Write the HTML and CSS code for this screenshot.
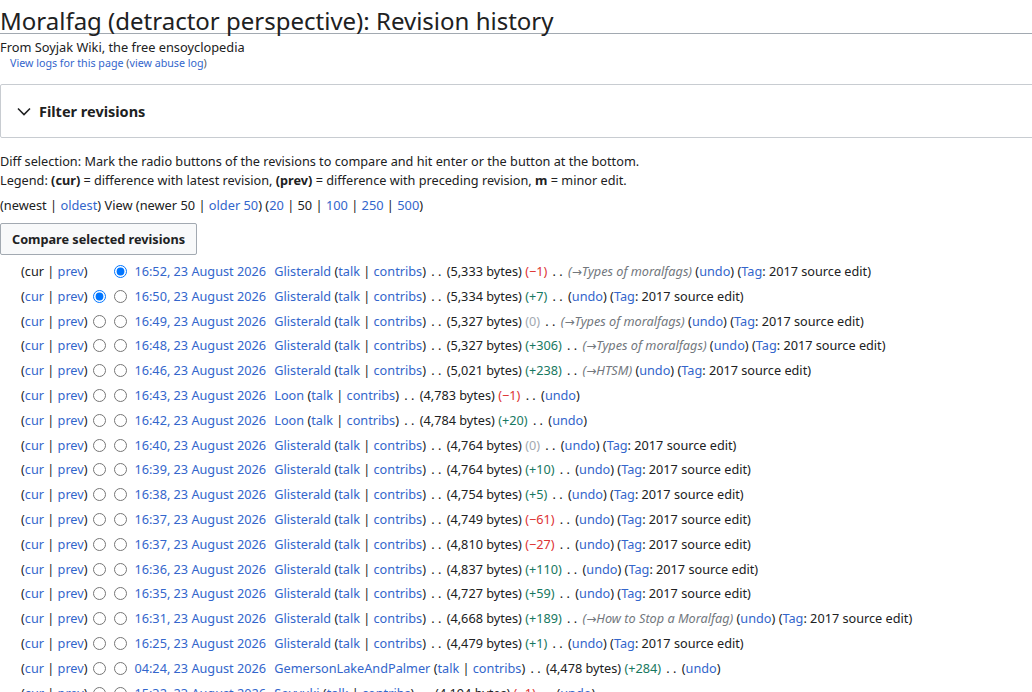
FILE: index.html
```html
<!DOCTYPE html>
<html lang="en">
<head>
<meta charset="utf-8">
<title>Moralfag (detractor perspective): Revision history</title>
<link rel="stylesheet" href="styles.css">
</head>
<body>
<div class="page">
  <h1 class="title">Moralfag (detractor perspective): Revision history</h1>
  <div class="tagline">From Soyjak Wiki, the free ensoyclopedia</div>
  <div class="logs"><a href="#">View logs for this page</a> (<a href="#">view abuse log</a>)</div>

  <div class="filter">
    <svg class="chev" width="16" height="16" viewBox="0 0 16 16"><path d="M2 5.5 L8 11.5 L14 5.5" fill="none" stroke="#202122" stroke-width="1.6"/></svg>
    <span class="filter-label">Filter revisions</span>
  </div>

  <p class="info">Diff selection: Mark the radio buttons of the revisions to compare and hit enter or the button at the bottom.<br>Legend: <b>(cur)</b> = difference with latest revision, <b>(prev)</b> = difference with preceding revision, <b>m</b> = minor edit.</p>

  <p class="nav">(newest | <a href="#">oldest</a>) View (newer 50 | <a href="#">older 50</a>) (<a href="#">20</a> | 50 | <a href="#">100</a> | <a href="#">250</a> | <a href="#">500</a>)</p>

  <button class="compare">Compare selected revisions</button>

  <ul class="history">
    <li>(cur | <a href="#">prev</a>) <input type="radio" class="hidden" name="o1"> <input type="radio" name="d1" checked> <a href="#" class="date">16:52, 23 August 2026</a> <span class="user"><a href="#">Glisterald</a> (<a href="#">talk</a> | <a href="#">contribs</a>)</span> <span class="sep">. .</span> (5,333 bytes) <span class="neg">(−1)</span> <span class="sep">. .</span> <span class="cmt">(<span class="arr">→</span>Types of moralfags)</span> (<a href="#">undo</a>) (<a href="#">Tag</a>: 2017 source edit)</li>
    <li>(<a href="#">cur</a> | <a href="#">prev</a>) <input type="radio" name="o2" checked> <input type="radio" name="d2"> <a href="#" class="date">16:50, 23 August 2026</a> <span class="user"><a href="#">Glisterald</a> (<a href="#">talk</a> | <a href="#">contribs</a>)</span> <span class="sep">. .</span> (5,334 bytes) <span class="pos">(+7)</span> <span class="sep">. .</span> (<a href="#">undo</a>) (<a href="#">Tag</a>: 2017 source edit)</li>
    <li>(<a href="#">cur</a> | <a href="#">prev</a>) <input type="radio"> <input type="radio"> <a href="#" class="date">16:49, 23 August 2026</a> <span class="user"><a href="#">Glisterald</a> (<a href="#">talk</a> | <a href="#">contribs</a>)</span> <span class="sep">. .</span> (5,327 bytes) <span class="null">(0)</span> <span class="sep">. .</span> <span class="cmt">(<span class="arr">→</span>Types of moralfags)</span> (<a href="#">undo</a>) (<a href="#">Tag</a>: 2017 source edit)</li>
    <li>(<a href="#">cur</a> | <a href="#">prev</a>) <input type="radio"> <input type="radio"> <a href="#" class="date">16:48, 23 August 2026</a> <span class="user"><a href="#">Glisterald</a> (<a href="#">talk</a> | <a href="#">contribs</a>)</span> <span class="sep">. .</span> (5,327 bytes) <span class="pos">(+306)</span> <span class="sep">. .</span> <span class="cmt">(<span class="arr">→</span>Types of moralfags)</span> (<a href="#">undo</a>) (<a href="#">Tag</a>: 2017 source edit)</li>
    <li>(<a href="#">cur</a> | <a href="#">prev</a>) <input type="radio"> <input type="radio"> <a href="#" class="date">16:46, 23 August 2026</a> <span class="user"><a href="#">Glisterald</a> (<a href="#">talk</a> | <a href="#">contribs</a>)</span> <span class="sep">. .</span> (5,021 bytes) <span class="pos">(+238)</span> <span class="sep">. .</span> <span class="cmt">(<span class="arr">→</span>HTSM)</span> (<a href="#">undo</a>) (<a href="#">Tag</a>: 2017 source edit)</li>
    <li>(<a href="#">cur</a> | <a href="#">prev</a>) <input type="radio"> <input type="radio"> <a href="#" class="date">16:43, 23 August 2026</a> <span class="user"><a href="#">Loon</a> (<a href="#">talk</a> | <a href="#">contribs</a>)</span> <span class="sep">. .</span> (4,783 bytes) <span class="neg">(−1)</span> <span class="sep">. .</span> (<a href="#">undo</a>)</li>
    <li>(<a href="#">cur</a> | <a href="#">prev</a>) <input type="radio"> <input type="radio"> <a href="#" class="date">16:42, 23 August 2026</a> <span class="user"><a href="#">Loon</a> (<a href="#">talk</a> | <a href="#">contribs</a>)</span> <span class="sep">. .</span> (4,784 bytes) <span class="pos">(+20)</span> <span class="sep">. .</span> (<a href="#">undo</a>)</li>
    <li>(<a href="#">cur</a> | <a href="#">prev</a>) <input type="radio"> <input type="radio"> <a href="#" class="date">16:40, 23 August 2026</a> <span class="user"><a href="#">Glisterald</a> (<a href="#">talk</a> | <a href="#">contribs</a>)</span> <span class="sep">. .</span> (4,764 bytes) <span class="null">(0)</span> <span class="sep">. .</span> (<a href="#">undo</a>) (<a href="#">Tag</a>: 2017 source edit)</li>
    <li>(<a href="#">cur</a> | <a href="#">prev</a>) <input type="radio"> <input type="radio"> <a href="#" class="date">16:39, 23 August 2026</a> <span class="user"><a href="#">Glisterald</a> (<a href="#">talk</a> | <a href="#">contribs</a>)</span> <span class="sep">. .</span> (4,764 bytes) <span class="pos">(+10)</span> <span class="sep">. .</span> (<a href="#">undo</a>) (<a href="#">Tag</a>: 2017 source edit)</li>
    <li>(<a href="#">cur</a> | <a href="#">prev</a>) <input type="radio"> <input type="radio"> <a href="#" class="date">16:38, 23 August 2026</a> <span class="user"><a href="#">Glisterald</a> (<a href="#">talk</a> | <a href="#">contribs</a>)</span> <span class="sep">. .</span> (4,754 bytes) <span class="pos">(+5)</span> <span class="sep">. .</span> (<a href="#">undo</a>) (<a href="#">Tag</a>: 2017 source edit)</li>
    <li>(<a href="#">cur</a> | <a href="#">prev</a>) <input type="radio"> <input type="radio"> <a href="#" class="date">16:37, 23 August 2026</a> <span class="user"><a href="#">Glisterald</a> (<a href="#">talk</a> | <a href="#">contribs</a>)</span> <span class="sep">. .</span> (4,749 bytes) <span class="neg">(−61)</span> <span class="sep">. .</span> (<a href="#">undo</a>) (<a href="#">Tag</a>: 2017 source edit)</li>
    <li>(<a href="#">cur</a> | <a href="#">prev</a>) <input type="radio"> <input type="radio"> <a href="#" class="date">16:37, 23 August 2026</a> <span class="user"><a href="#">Glisterald</a> (<a href="#">talk</a> | <a href="#">contribs</a>)</span> <span class="sep">. .</span> (4,810 bytes) <span class="neg">(−27)</span> <span class="sep">. .</span> (<a href="#">undo</a>) (<a href="#">Tag</a>: 2017 source edit)</li>
    <li>(<a href="#">cur</a> | <a href="#">prev</a>) <input type="radio"> <input type="radio"> <a href="#" class="date">16:36, 23 August 2026</a> <span class="user"><a href="#">Glisterald</a> (<a href="#">talk</a> | <a href="#">contribs</a>)</span> <span class="sep">. .</span> (4,837 bytes) <span class="pos">(+110)</span> <span class="sep">. .</span> (<a href="#">undo</a>) (<a href="#">Tag</a>: 2017 source edit)</li>
    <li>(<a href="#">cur</a> | <a href="#">prev</a>) <input type="radio"> <input type="radio"> <a href="#" class="date">16:35, 23 August 2026</a> <span class="user"><a href="#">Glisterald</a> (<a href="#">talk</a> | <a href="#">contribs</a>)</span> <span class="sep">. .</span> (4,727 bytes) <span class="pos">(+59)</span> <span class="sep">. .</span> (<a href="#">undo</a>) (<a href="#">Tag</a>: 2017 source edit)</li>
    <li>(<a href="#">cur</a> | <a href="#">prev</a>) <input type="radio"> <input type="radio"> <a href="#" class="date">16:31, 23 August 2026</a> <span class="user"><a href="#">Glisterald</a> (<a href="#">talk</a> | <a href="#">contribs</a>)</span> <span class="sep">. .</span> (4,668 bytes) <span class="pos">(+189)</span> <span class="sep">. .</span> <span class="cmt">(<span class="arr">→</span>How to Stop a Moralfag)</span> (<a href="#">undo</a>) (<a href="#">Tag</a>: 2017 source edit)</li>
    <li>(<a href="#">cur</a> | <a href="#">prev</a>) <input type="radio"> <input type="radio"> <a href="#" class="date">16:25, 23 August 2026</a> <span class="user"><a href="#">Glisterald</a> (<a href="#">talk</a> | <a href="#">contribs</a>)</span> <span class="sep">. .</span> (4,479 bytes) <span class="pos">(+1)</span> <span class="sep">. .</span> (<a href="#">undo</a>) (<a href="#">Tag</a>: 2017 source edit)</li>
    <li>(<a href="#">cur</a> | <a href="#">prev</a>) <input type="radio"> <input type="radio"> <a href="#" class="date">04:24, 23 August 2026</a> <span class="user"><a href="#">GemersonLakeAndPalmer</a> (<a href="#">talk</a> | <a href="#">contribs</a>)</span> <span class="sep">. .</span> (4,478 bytes) <span class="pos">(+284)</span> <span class="sep">. .</span> (<a href="#">undo</a>)</li>
    <li>(<a href="#">cur</a> | <a href="#">prev</a>) <input type="radio"> <input type="radio"> <a href="#" class="date">15:32, 23 August 2026</a> <span class="user"><a href="#">Soyyuki</a> (<a href="#">talk</a> | <a href="#">contribs</a>)</span> <span class="sep">. .</span> (4,194 bytes) <span class="neg">(−1)</span> <span class="sep">. .</span> (<a href="#">undo</a>)</li>
  </ul>
</div>
</body>
</html>
```

FILE: styles.css
```css
html, body {
  margin: 0;
  padding: 0;
  overflow: hidden;
  background: #fff;
}
body {
  font-family: "Noto Sans", "Open Sans", sans-serif;
  font-size: 12.8px;
  color: #202122;
}
a {
  color: #3366cc;
  text-decoration: none;
}
.page {
  width: 1040px;
}
.title {
  font-family: "Noto Sans", sans-serif;
  font-weight: normal;
  font-size: 24px;
  line-height: 24px;
  margin: 0;
  padding: 9px 0 0;
  border-bottom: 1px solid #a2a9b1;
}
.tagline {
  font-size: 12.8px;
  line-height: 18px;
  margin-top: 4px;
}
.logs {
  font-size: 10.7px;
  line-height: 15px;
  margin-left: 10px;
  color: #54595d;
}
.filter {
  margin-top: 13px;
  height: 52px;
  border: 1px solid #c8ccd1;
  border-radius: 2px;
  display: flex;
  align-items: center;
  padding-left: 15px;
  gap: 7px;
}
.chev {
  display: block;
}
.filter-label {
  font-weight: bold;
  font-size: 14.5px;
}
.info {
  margin: 14px 0 0;
  line-height: 19px;
  font-size: 12.7px;
}
.nav {
  margin: 5px 0 0;
  line-height: 20px;
}
.compare {
  display: block;
  margin-top: 8px;
  font-family: "Noto Sans", sans-serif;
  font-weight: bold;
  font-size: 12.7px;
  color: #202122;
  background: #f8f9fa;
  border: 1px solid #a2a9b1;
  border-radius: 2px;
  height: 32px;
  padding: 0 11px;
}
.history {
  list-style: none;
  margin: 5px 0 0;
  padding: 0 0 0 21px;
  font-size: 12.7px;
}
.history li {
  height: 22.8px;
  line-height: 22.8px;
  margin-bottom: 2px;
  white-space: nowrap;
}
.history input {
  margin: 0 3px 0 2px;
  width: 13px;
  height: 13px;
  vertical-align: -2px;
}
.history input.hidden {
  visibility: hidden;
}
.date {
  margin-left: 1px;
  margin-right: 5px;
}
.sep {
  margin: 0 2px;
}
.neg { color: #d33; }
.pos { color: #177860; }
.null { color: #a2a9b1; }
.cmt {
  font-style: italic;
  color: #72777d;
}
.arr {
  font-family: "DejaVu Sans", sans-serif;
  font-style: normal;
  font-size: 0.95em;
}
```
